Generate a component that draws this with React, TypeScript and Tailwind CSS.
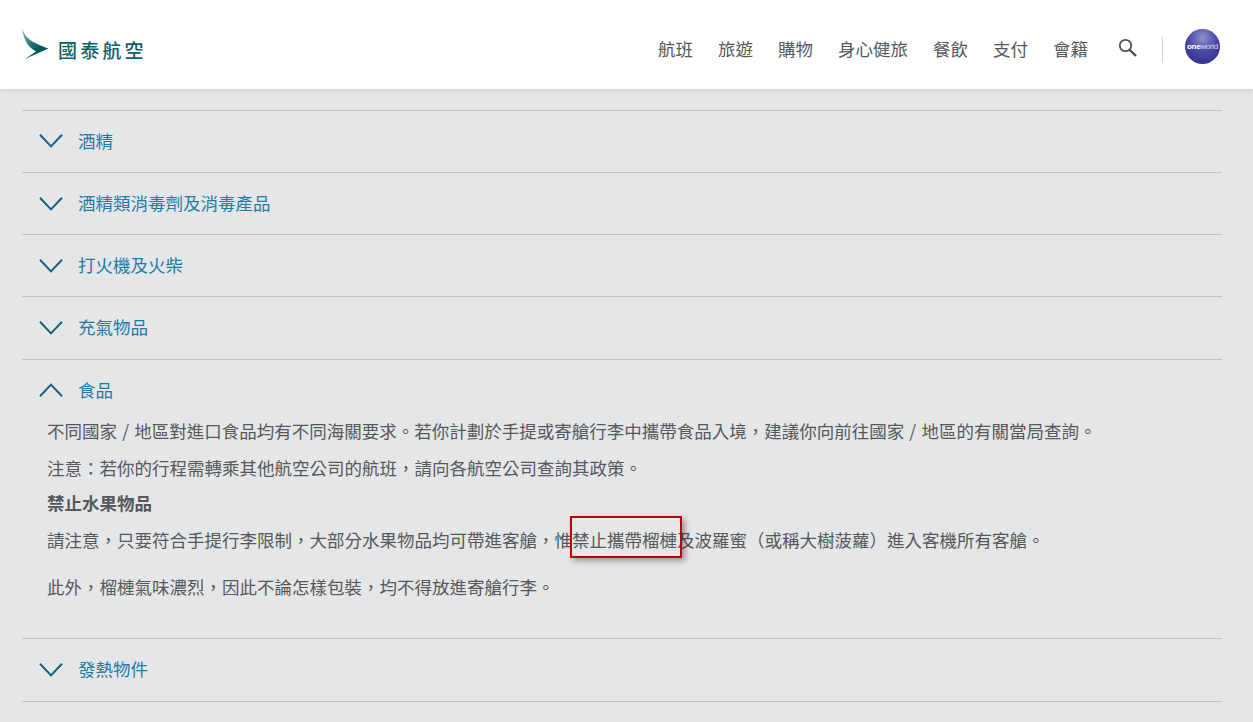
import React from "react";

const font = { fontFamily: '"Noto Sans CJK TC", "Noto Sans CJK SC", sans-serif' };

function Chevron({ up = false }: { up?: boolean }) {
  return (
    <svg width="24" height="14" viewBox="0 0 24 14" className="shrink-0" aria-hidden="true">
      <path
        d={up ? "M1 13.2 12 1.6 23 13.2" : "M1 .8 12 12.4 23 .8"}
        fill="none"
        stroke="#17607f"
        strokeWidth="2"
      />
    </svg>
  );
}

function Row({ label, last = false }: { label: string; last?: boolean }) {
  return (
    <div className={`flex items-center gap-[15px] border-t border-[#bfc0c2] pl-[17px] ${last ? "h-[63px]" : "h-[62.2px]"}`}>
      <Chevron />
      <span className="mb-[2px] text-[17.5px] leading-none text-[#1d7ba6]">{label}</span>
    </div>
  );
}

export default function App() {
  return (
    <div lang="zh-Hant" className="h-[722px] w-[1253px] overflow-hidden bg-[#e5e6e8] [text-spacing-trim:space-all]" style={font}>
      <header className="flex h-[89px] items-center justify-between bg-white pl-[22px] pr-[33px] shadow-[0_1px_5px_rgba(0,0,0,0.12)]">
        <div className="flex items-center gap-[9px]">
          <svg width="27" height="32" viewBox="0 0 27 32" aria-hidden="true" className="mb-[2px]">
            <defs>
              <linearGradient id="wing" x1="0" y1="0" x2="0.6" y2="0.7">
                <stop offset="0" stopColor="#a9c6c7" />
                <stop offset="0.5" stopColor="#3f8587" />
                <stop offset="1" stopColor="#00585c" />
              </linearGradient>
            </defs>
            <path d="M0 0C1.5 5 5 10 9 12.5 12 14.5 18 17.5 26.5 20.5L3 31 14 23.5C5 19 1 9 0 0Z" fill="url(#wing)" />
          </svg>
          <span className="mt-[10px] text-[19px] font-medium leading-none tracking-[3.2px] text-[#0c6266]">國泰航空</span>
        </div>
        <nav className="flex items-center text-[#55595c]">
          <div className="mt-[8px] flex items-center gap-[25px] text-[17.5px] leading-none">
            <span>航班</span>
            <span>旅遊</span>
            <span>購物</span>
            <span>身心健旅</span>
            <span>餐飲</span>
            <span>支付</span>
            <span>會籍</span>
          </div>
          <svg width="20" height="20" viewBox="0 0 20 20" className="ml-[30px] mt-[7px]" aria-hidden="true">
            <circle cx="7.5" cy="7.5" r="5.7" fill="none" stroke="#4c5256" strokeWidth="1.8" />
            <path d="M11.8 11.8 18 18" stroke="#4c5256" strokeWidth="2.4" />
          </svg>
          <div className="ml-[24px] mr-[22px] mt-[10px] h-[25px] w-px bg-[#d4d6d8]" />
          <div className="mt-[4px] flex h-[35px] w-[35px] items-center justify-center rounded-full bg-[radial-gradient(circle_at_50%_25%,#8f90d0_0%,#4a4aa6_45%,#2a2a85_100%)]">
            <span className="text-[8px] font-bold leading-none tracking-[-0.3px] text-white" style={{ fontFamily: '"Liberation Sans", sans-serif' }}>
              one<span className="font-normal opacity-75">world</span>
            </span>
          </div>
        </nav>
      </header>

      <main className="mx-[22px] mt-[20.8px] w-[1200px]">
        <Row label="酒精" />
        <Row label="酒精類消毒劑及消毒產品" />
        <Row label="打火機及火柴" />
        <Row label="充氣物品" />
        <section className="h-[279px] border-t border-[#bfc0c2]">
          <div className="box-border flex h-[58px] items-center gap-[15px] pl-[17px] pt-[2px]">
            <Chevron up />
            <span className="text-[17.5px] leading-none text-[#1d7ba6]">食品</span>
          </div>
          <div className="pl-[25px] text-[17.5px] leading-[25px] text-[#55595c]">
            <p className="[word-spacing:1.25px]">不同國家 / 地區對進口食品均有不同海關要求。若你計劃於手提或寄艙行李中攜帶食品入境，建議你向前往國家 / 地區的有關當局查詢。</p>
            <p className="mt-[12px]">注意：若你的行程需轉乘其他航空公司的航班，請向各航空公司查詢其政策。</p>
            <p className="mt-[10px] font-bold">禁止水果物品</p>
            <p className="relative mt-[12px]">
              請注意，只要符合手提行李限制，大部分水果物品均可帶進客艙，惟禁止攜帶榴槤及波羅蜜（或稱大樹菠蘿）進入客機所有客艙。
              <span className="absolute left-[523px] top-[-11px] h-[42px] w-[112px] border-2 border-[#c00000] shadow-[3px_3px_6px_rgba(0,0,0,0.35)]" />
            </p>
            <p className="mt-[22px]">此外，榴槤氣味濃烈，因此不論怎樣包裝，均不得放進寄艙行李。</p>
          </div>
        </section>
        <Row label="發熱物件" last />
        <div className="border-t border-[#bfc0c2]" />
      </main>
    </div>
  );
}
